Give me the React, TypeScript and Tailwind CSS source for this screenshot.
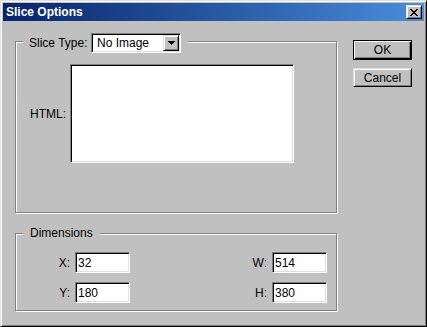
const sunken =
  "border border-t-[#808080] border-l-[#808080] border-r-white border-b-white shadow-[inset_1px_1px_0_#000,inset_-1px_-1px_0_#dfdfdf] bg-white";
const raised =
  "border border-t-[#dfdfdf] border-l-[#dfdfdf] border-r-black border-b-black shadow-[inset_1px_1px_0_#fff,inset_-1px_-1px_0_#808080] bg-[#c0c0c0]";
const etched = "relative border border-[#808080] shadow-[inset_1px_1px_0_#fff,1px_1px_0_#fff]";

function Field({ label, value }: { label: string; value: string }) {
  return (
    <div className="flex items-center">
      <span className="w-[24px] text-right mr-[5px]">{label}</span>
      <div className={`${sunken} w-[55px] h-[21px] flex items-center pl-[2px]`}>{value}</div>
    </div>
  );
}

export default function App() {
  return (
    <div className="w-[427px] h-[327px] bg-[#c0c0c0] border border-t-[#dfdfdf] border-l-[#dfdfdf] border-r-black border-b-black shadow-[inset_1px_1px_0_#fff,inset_-1px_-1px_0_#808080] font-['Liberation_Sans',Arial,sans-serif] text-[12px] leading-[14px] text-black">
      {/* title bar */}
      <div className="mx-[2px] mt-[2px] h-[18px] flex items-center justify-between pl-[3px] pr-[2px] bg-gradient-to-r from-[#0a246a] to-[#4a8edc]">
        <span className="text-white font-bold text-[12px]">Slice Options</span>
        <div className={`${raised} w-[16px] h-[14px] flex items-center justify-center`}>
          <svg width="8" height="7" viewBox="0 0 8 7" shapeRendering="crispEdges">
            <path
              d="M0 0h2v1h-2zM6 0h2v1h-2zM1 1h2v1h-2zM5 1h2v1h-2zM2 2h4v1h-4zM3 3h2v1h-2zM2 4h4v1h-4zM1 5h2v1h-2zM5 5h2v1h-2zM0 6h2v1h-2zM6 6h2v1h-2z"
              fill="#000"
            />
          </svg>
        </div>
      </div>

      {/* body */}
      <div className="flex items-start pl-[14px] pt-[19px]">
        <div className="pt-px">
          <div className={`${etched} w-[322px] h-[172px] pt-[22px] pl-[14px]`}>
            <div className="absolute -top-[9px] left-[7px] pl-[6px] pr-[7px] bg-[#c0c0c0] flex items-center">
              <span className="w-[62px]">Slice Type:</span>
              <div className={`${sunken} w-[90px] h-[20px] flex items-center pl-[5px]`}>
                <span>No Image</span>
                <div className={`${raised} ml-auto mr-px w-[16px] h-[16px] flex items-center justify-center`}>
                  <svg width="7" height="4" viewBox="0 0 7 4" shapeRendering="crispEdges">
                    <path d="M0 0h7v1h-7zM1 1h5v1h-5zM2 2h3v1h-3zM3 3h1v1h-1z" fill="#000" />
                  </svg>
                </div>
              </div>
            </div>
            <div className="flex items-center">
              <span className="w-[40px]">HTML:</span>
              <div className={`${sunken} w-[224px] h-[99px]`} />
            </div>
          </div>

          <div className={`${etched} w-[322px] h-[78px] mt-[20px] pt-[18px] pl-[30px]`}>
            <div className="absolute -top-[8px] left-[7px] px-[7px] bg-[#c0c0c0]">Dimensions</div>
            <div className="flex flex-col gap-[9px]">
              <div className="flex gap-[113px]">
                <Field label="X:" value="32" />
                <Field label="W:" value="514" />
              </div>
              <div className="flex gap-[113px]">
                <Field label="Y:" value="180" />
                <Field label="H:" value="380" />
              </div>
            </div>
          </div>
        </div>

        <div className="ml-[16px] flex flex-col gap-[8px]">
          <button className="w-[59px] h-[20px] border border-black shadow-[inset_1px_1px_0_#fff,inset_-1px_-1px_0_#000,inset_-2px_-2px_0_#808080] bg-[#c0c0c0] flex items-center justify-center">
            OK
          </button>
          <button className={`${raised} w-[59px] h-[19px] flex items-center justify-center`}>Cancel</button>
        </div>
      </div>
    </div>
  );
}
